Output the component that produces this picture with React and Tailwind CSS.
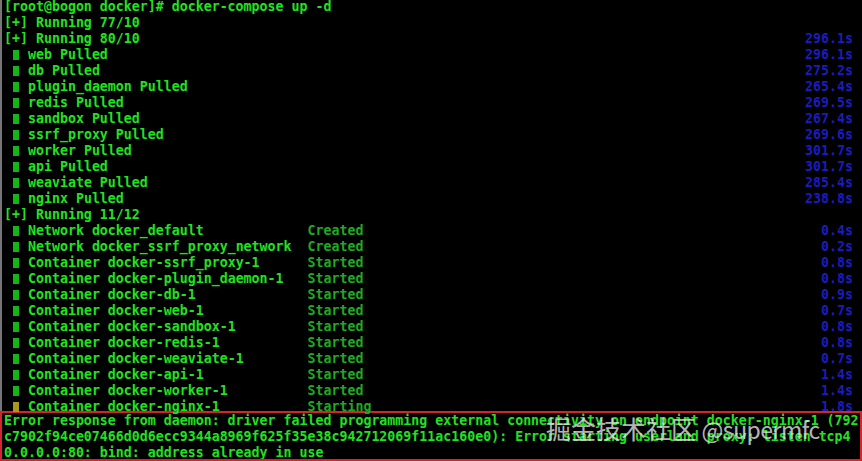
const pulled = [
  ['web', '296.1s'],
  ['db', '275.2s'],
  ['plugin_daemon', '265.4s'],
  ['redis', '269.5s'],
  ['sandbox', '267.4s'],
  ['ssrf_proxy', '269.6s'],
  ['worker', '301.7s'],
  ['api', '301.7s'],
  ['weaviate', '285.4s'],
  ['nginx', '238.8s'],
];

const started = [
  ['Network docker_default', 'Created', '0.4s'],
  ['Network docker_ssrf_proxy_network', 'Created', '0.2s'],
  ['Container docker-ssrf_proxy-1', 'Started', '0.8s'],
  ['Container docker-plugin_daemon-1', 'Started', '0.8s'],
  ['Container docker-db-1', 'Started', '0.9s'],
  ['Container docker-web-1', 'Started', '0.7s'],
  ['Container docker-sandbox-1', 'Started', '0.8s'],
  ['Container docker-redis-1', 'Started', '0.8s'],
  ['Container docker-weaviate-1', 'Started', '0.7s'],
  ['Container docker-api-1', 'Started', '1.4s'],
  ['Container docker-worker-1', 'Started', '1.4s'],
  ['Container docker-nginx-1', 'Starting', '1.8s', true],
];

function Marker({ pending }) {
  return (
    <span className="inline-block w-2 h-4 align-top">
      <span
        className={`block w-[6px] h-[10px] mt-[3px] ml-[1px] ${pending ? 'bg-[#a89a1c]' : 'bg-[#17b417]'}`}
      />
    </span>
  );
}

function Row({ children, time }) {
  return (
    <div className="flex justify-between h-4 leading-4 whitespace-pre">
      <span>{children}</span>
      {time && <span className="text-[#1c1cbc]">{time}</span>}
    </div>
  );
}

export default function App() {
  return (
    <div
      className="relative w-[862px] h-[461px] overflow-hidden bg-black text-[#22e122] font-bold text-[13.28px]"
      style={{ fontFamily: '"DejaVu Sans Mono", "Liberation Mono", monospace' }}
    >
      {/* scrollback */}
      <div className="h-[412px] border-l-2 border-[#767676] pl-[2px] pr-[9px] -mt-px">
        <Row>[root@bogon docker]# docker-compose up -d</Row>
        <Row>[+] Running 77/10</Row>
        <Row time="296.1s">[+] Running 80/10</Row>
        {pulled.map(([name, t]) => (
          <Row key={name} time={t}>
            {' '}
            <Marker />
            {' ' + name + ' Pulled'}
          </Row>
        ))}
        <Row>[+] Running 11/12</Row>
        {started.map(([name, status, t, pending]) => (
          <Row key={name} time={t}>
            {' '}
            <Marker pending={pending} />
            {' ' + name.padEnd(35, ' ')}
            <span className="text-[#22a822]">{status}</span>
          </Row>
        ))}
      </div>

      {/* highlighted error */}
      <div className="h-[49px] border-2 border-b-0 border-[#d4242c] pl-[2px] overflow-visible">
        <div className="h-4 leading-4 whitespace-pre">
          Error response from daemon: driver failed programming external connectivity on endpoint docker-nginx-1 (792
        </div>
        <div className="h-4 leading-4 whitespace-pre">
          c7902f94ce07466d0d6ecc9344a8969f625f35e38c942712069f11ac160e0): Error starting userland proxy: listen tcp4
        </div>
        <div className="h-4 leading-4 whitespace-pre">0.0.0.0:80: bind: address already in use</div>
      </div>
      <div className="absolute left-0 right-0 bottom-0 h-[2px] bg-[#d4242c]" />

      {/* watermark */}
      <div
        className="absolute left-[546px] top-[410px] text-[25px] leading-[36px] font-normal text-[#e6e6e6]/80 whitespace-nowrap"
        style={{ fontFamily: '"Noto Sans CJK SC", "Noto Sans", sans-serif' }}
      >
        掘金技术社区 <span className="text-[23px] tracking-[-0.5px]">@supermfc</span>
      </div>
    </div>
  );
}
